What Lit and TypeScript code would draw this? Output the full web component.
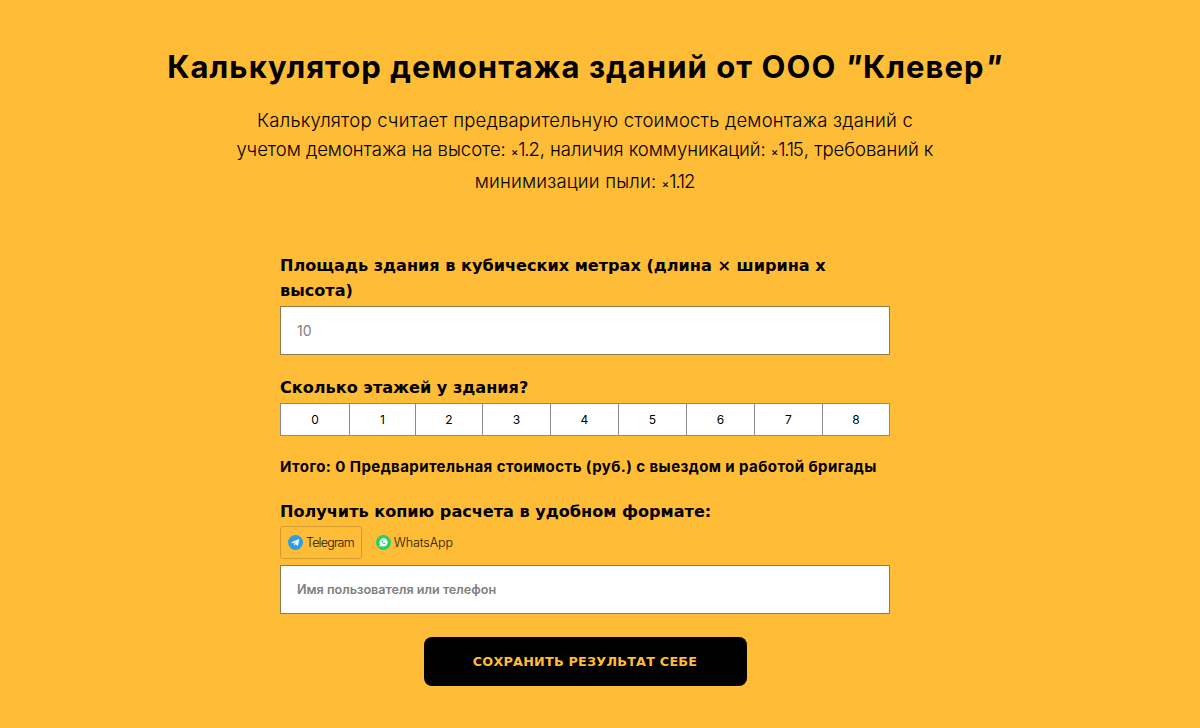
import { LitElement, html, css } from 'lit';
import { customElement, state } from 'lit/decorators.js';

const FLOORS = ['0', '1', '2', '3', '4', '5', '6', '7', '8'];

@customElement('app-root')
export class AppRoot extends LitElement {
  static override styles = css`
    :host {
      display: block;
      min-height: 728px;
      background: #ffbc36;
      color: #000;
      font-family: 'Inter', 'Liberation Sans', sans-serif;
    }

    .page {
      display: flex;
      flex-direction: column;
      align-items: center;
      padding: 44px 30px 0 0;
    }

    h1 {
      margin: 0;
      font-size: 31px;
      line-height: 46px;
      font-weight: 700;
      letter-spacing: 1.05px;
      white-space: nowrap;
    }

    .q {
      font-style: italic;
    }

    .lead {
      margin: 16px 0 0;
      text-align: center;
      font-size: 18.5px;
      line-height: 29px;
      font-weight: 300;
      letter-spacing: 0.2px;
      white-space: nowrap;
    }

    .tight {
      letter-spacing: -0.04px;
    }

    .x {
      font-size: 11px;
      font-weight: 500;
    }

    .n {
      letter-spacing: -1.2px;
      margin-right: 1.2px;
    }

    form {
      width: 610px;
      margin-top: 54px;
      display: flex;
      flex-direction: column;
    }

    .label {
      font-family: 'DejaVu Sans', sans-serif;
      font-size: 16.1px;
      line-height: 25px;
      font-weight: 700;
    }

    input {
      box-sizing: border-box;
      display: block;
      width: 100%;
      height: 49px;
      margin: 3px 0 0;
      padding: 0 16px;
      border: 1px solid #8f7a4c;
      border-radius: 0;
      background: #fff;
      font-family: inherit;
      font-size: 14px;
      font-weight: 400;
      color: #000;
    }

    input::placeholder {
      color: #808080;
      opacity: 1;
    }

    .floors-label {
      margin-top: 20px;
    }

    .floors {
      display: grid;
      grid-template-columns: 68px 66px 67px repeat(5, 68px) 1fr;
      height: 33px;
      margin-top: 3px;
      box-sizing: border-box;
      border: 1px solid #8a8a8a;
      background: #fff;
    }

    .floor {
      display: flex;
      align-items: center;
      justify-content: center;
      font-size: 12px;
      border-left: 1px solid #8a8a8a;
    }

    .floor:first-child {
      border-left: 0;
    }

    .total {
      margin-top: 19px;
      font-size: 15px;
      line-height: 24px;
      font-weight: 700;
      letter-spacing: 0.42px;
    }

    .copy-label {
      margin-top: 20px;
    }

    .tabs {
      display: flex;
      gap: 6px;
      margin-top: 2px;
    }

    .tab {
      display: flex;
      align-items: center;
      gap: 3px;
      box-sizing: border-box;
      height: 33px;
      padding: 0 7px;
      border: 1px solid #d29a30;
      border-radius: 3px;
      font-size: 12.5px;
      font-weight: 300;
      letter-spacing: -0.1px;
      color: #1c1605;
    }

    .tab.on {
      letter-spacing: -0.8px;
    }

    .tab.off {
      border-color: transparent;
    }

    .tab svg {
      display: block;
    }

    .tabs + input {
      margin-top: 6px;
      font-size: 12.6px;
      font-weight: 600;
    }

    .save {
      align-self: center;
      width: 323px;
      height: 49px;
      margin-top: 23px;
      border: 0;
      border-radius: 8px;
      background: #000;
      color: #ffbc36;
      font-family: 'DejaVu Sans', sans-serif;
      font-size: 12.8px;
      font-weight: 700;
      letter-spacing: 0.2px;
    }
  `;

  @state() private _area = '';

  override render() {
    return html`
      <div class="page">
        <h1>Калькулятор демонтажа зданий от ООО <span class="q">"</span>Клевер<span class="q">"</span></h1>
        <p class="lead">
          Калькулятор считает предварительную стоимость демонтажа зданий с<br />
          <span class="tight">учетом демонтажа на высоте: <span class="x">×</span><span class="n">1.2</span>, наличия коммуникаций: <span class="x">×</span><span class="n">1.15</span>, требований к</span><br />
          минимизации пыли: <span class="x">×</span><span class="n">1.12</span>
        </p>
        <form>
          <div class="label">Площадь здания в кубических метрах (длина × ширина х<br />высота)</div>
          <input placeholder="10" .value=${this._area} />
          <div class="label floors-label">Сколько этажей у здания?</div>
          <div class="floors">
            ${FLOORS.map((f) => html`<div class="floor">${f}</div>`)}
          </div>
          <div class="total">Итого: 0 Предварительная стоимость (руб.) с выездом и работой бригады</div>
          <div class="label copy-label">Получить копию расчета в удобном формате:</div>
          <div class="tabs">
            <div class="tab on">
              <svg width="15" height="15" viewBox="0 0 15 15">
                <circle cx="7.5" cy="7.5" r="7.5" fill="#2a9fe3" />
                <path d="M3 7.4 11.2 4.1 10 11 7.6 9.2 6.3 10.4 6.2 8.6 9.6 5.6 5.3 8.2Z" fill="#fff" />
              </svg>
              Telegram
            </div>
            <div class="tab off">
              <svg width="15" height="15" viewBox="0 0 15 15">
                <circle cx="7.5" cy="7.5" r="7.5" fill="#25d366" />
                <path d="M3.3 11.8 4 9.4A4.1 4.1 0 1 1 5.6 11Z" fill="#fff" />
                <path d="M6 5.2c-.7.6-.4 1.6.4 2.6s1.9 1.6 2.6 1.1l.4-.6-1.1-.7-.4.4c-.5-.1-1-.7-1.2-1.2l.4-.4-.6-1.2Z" fill="#25d366" />
              </svg>
              WhatsApp
            </div>
          </div>
          <input placeholder="Имя пользователя или телефон" />
          <button class="save" type="button">СОХРАНИТЬ РЕЗУЛЬТАТ СЕБЕ</button>
        </form>
      </div>
    `;
  }
}
